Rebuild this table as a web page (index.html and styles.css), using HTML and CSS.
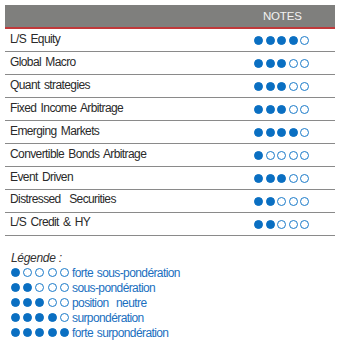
FILE: index.html
```html
<!DOCTYPE html>
<html>
<head>
<meta charset="utf-8">
<link rel="stylesheet" href="styles.css">
</head>
<body>
<div class="wrap">
  <div class="head"><span class="notes">NOTES</span></div>
  <div class="row"><span class="name">L/S Equity</span><span class="dots"><i class="f"></i><i class="f"></i><i class="f"></i><i class="f"></i><i></i></span></div>
  <div class="row"><span class="name">Global Macro</span><span class="dots"><i class="f"></i><i class="f"></i><i class="f"></i><i></i><i></i></span></div>
  <div class="row"><span class="name">Quant strategies</span><span class="dots"><i class="f"></i><i class="f"></i><i class="f"></i><i></i><i></i></span></div>
  <div class="row"><span class="name">Fixed Income Arbitrage</span><span class="dots"><i class="f"></i><i class="f"></i><i class="f"></i><i></i><i></i></span></div>
  <div class="row"><span class="name">Emerging Markets</span><span class="dots"><i class="f"></i><i class="f"></i><i class="f"></i><i class="f"></i><i></i></span></div>
  <div class="row"><span class="name">Convertible Bonds Arbitrage</span><span class="dots"><i class="f"></i><i></i><i></i><i></i><i></i></span></div>
  <div class="row"><span class="name">Event Driven</span><span class="dots"><i class="f"></i><i class="f"></i><i class="f"></i><i></i><i></i></span></div>
  <div class="row"><span class="name up">Distressed&nbsp; Securities</span><span class="dots"><i class="f"></i><i class="f"></i><i></i><i></i><i></i></span></div>
  <div class="row"><span class="name up">L/S Credit &amp; HY</span><span class="dots"><i class="f"></i><i class="f"></i><i></i><i></i><i></i></span></div>

  <div class="legend">
    <div class="ltitle">Légende :</div>
    <div class="lrow"><span class="dots ld"><i class="f"></i><i></i><i></i><i></i><i></i></span><span class="ltext">forte sous-pondération</span></div>
    <div class="lrow"><span class="dots ld"><i class="f"></i><i class="f"></i><i></i><i></i><i></i></span><span class="ltext">sous-pondération</span></div>
    <div class="lrow"><span class="dots ld"><i class="f"></i><i class="f"></i><i class="f"></i><i></i><i></i></span><span class="ltext">position&nbsp; neutre</span></div>
    <div class="lrow"><span class="dots ld"><i class="f"></i><i class="f"></i><i class="f"></i><i class="f"></i><i></i></span><span class="ltext">surpondération</span></div>
    <div class="lrow"><span class="dots ld"><i class="f"></i><i class="f"></i><i class="f"></i><i class="f"></i><i class="f"></i></span><span class="ltext">forte surpondération</span></div>
  </div>
</div>
</body>
</html>
```

FILE: styles.css
```css
html, body {
  margin: 0;
  padding: 0;
  background: #fff;
}
body {
  font-family: "Liberation Sans", Arial, sans-serif;
}
.wrap {
  padding: 5px 0 0 5px;
  width: 330px;
}
.head {
  height: 22px;
  background: #7f7f7d;
  border-bottom: 2px solid #c0393b;
  display: flex;
  align-items: center;
}
.notes {
  margin-left: 258px;
  color: #f2f2f2;
  font-size: 11.5px;
  letter-spacing: -0.2px;
}
.row {
  height: 22px;
  border-bottom: 1px solid #8a8a8a;
  display: flex;
  align-items: center;
}
.name {
  margin-left: 5px;
  width: 244px;
  font-size: 12px;
  color: #2a2a2a;
  letter-spacing: -0.6px;
  word-spacing: 1.5px;
  position: relative;
  top: -1px;
}
.name.up {
  top: -2px;
}
.dots {
  display: flex;
  gap: 2.5px;
}
.dots i {
  display: block;
  width: 9px;
  height: 9px;
  box-sizing: border-box;
  border-radius: 50%;
  border: 1px solid #1a7ac9;
  background: #fff;
}
.dots i.f {
  background: #0a6fc2;
  border-color: #0a6fc2;
}
.legend {
  margin-top: 16px;
  padding-left: 6px;
}
.ltitle {
  font-size: 12px;
  font-style: italic;
  color: #333;
  height: 13px;
  line-height: 13px;
  letter-spacing: -0.3px;
}
.lrow {
  display: flex;
  align-items: center;
  height: 15px;
}
.ld {
  gap: 3.2px;
  width: 58px;
}
.ltext {
  margin-left: 3px;
  font-size: 12px;
  color: #1a6fc0;
  letter-spacing: -0.6px;
  word-spacing: 1px;
}
```
